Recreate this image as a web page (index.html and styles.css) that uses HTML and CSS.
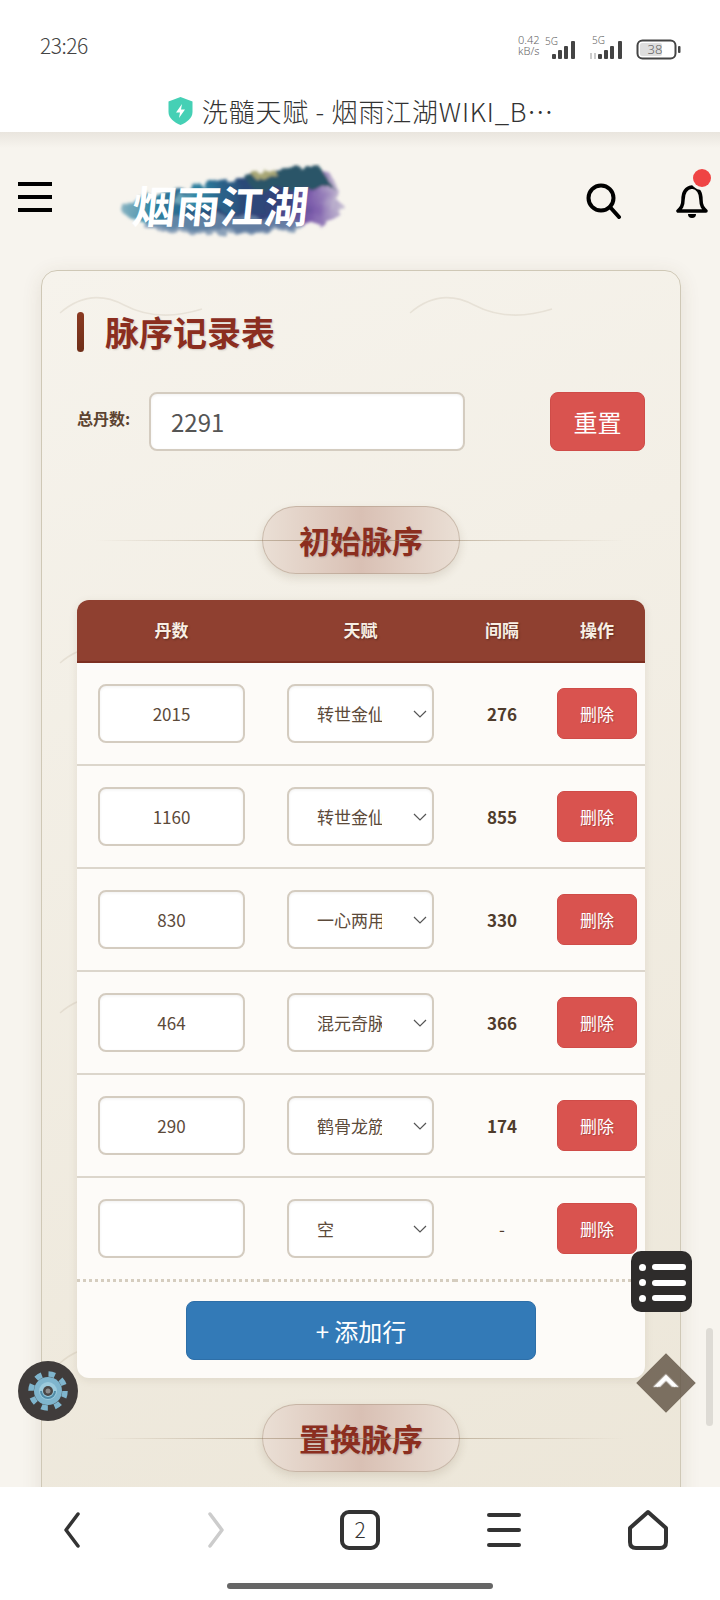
FILE: index.html
```html
<!DOCTYPE html>
<html lang="zh">
<head>
<meta charset="utf-8">
<title>洗髓天赋 - 烟雨江湖WIKI</title>
<link rel="stylesheet" href="styles.css">
</head>
<body>
<div class="app">
  <div class="status-bar">
    <span class="clock">23:26</span>
    <svg class="status-icons" width="164" height="30" viewBox="0 0 164 30">
      <g class="st-thin">
        <text x="0" y="11" font-size="11">0.42</text>
        <text x="0" y="22" font-size="11">kB/s</text>
        <text x="27" y="12" font-size="10">5G</text>
        <text x="74" y="11" font-size="10">5G</text>
      </g>
      <g fill="#444">
        <rect x="34" y="21" width="4" height="5" rx="1"/>
        <rect x="40" y="17" width="4" height="9" rx="1"/>
        <rect x="46" y="13" width="4" height="13" rx="1"/>
        <rect x="53" y="8" width="4" height="18" rx="1"/>
        <rect x="80" y="21" width="4" height="5" rx="1"/>
        <rect x="86" y="17" width="4" height="9" rx="1"/>
        <rect x="92" y="13" width="4" height="13" rx="1"/>
        <rect x="100" y="8" width="4" height="18" rx="1"/>
      </g>
      <path d="M73 20v6M77 20v6" stroke="#bbb" stroke-width="1.5"/>
      <rect x="119.500" y="7.500" width="38" height="18" rx="5" fill="none" stroke="#444" stroke-width="2"/>
      <rect x="122" y="10" width="22" height="13" rx="2" fill="#dedede"/>
      <rect x="160" y="13" width="2.500" height="7" rx="1" fill="#444"/>
      <text x="137" y="21" font-size="13" text-anchor="middle" class="st-thin">38</text>
    </svg>
  </div>

  <div class="title-bar">
    <svg class="shield" width="25" height="28" viewBox="0 0 25 28">
      <path d="M12.500 0 L24.500 4.500 V15 C24.500 21 19 25.500 12.500 28 C6 25.500 0.500 21 0.500 15 V4.500 Z" fill="#45d0b5"/>
      <path d="M14 7 L8 15.500 H12 L11 21 L17 12.500 H13 Z" fill="#fff"/>
    </svg>
    <span class="page-title">洗髓天赋 - 烟雨江湖WIKI_B…</span>
  </div>

  <main class="viewport">
    <header class="site-header">
      <div class="burger"><i></i><i></i><i></i></div>
      <svg class="logo" width="240" height="76" viewBox="0 0 240 76">
        <defs>
          <linearGradient id="ink" x1="0" x2="1" y1="0" y2="0">
            <stop offset="0" stop-color="#8fb6c4"/>
            <stop offset="0.14" stop-color="#2d85a3"/>
            <stop offset="0.42" stop-color="#2b4a78"/>
            <stop offset="0.68" stop-color="#34407a"/>
            <stop offset="0.84" stop-color="#7c5cab"/>
            <stop offset="1" stop-color="#c5bdd2"/>
          </linearGradient>
          <filter id="rough" x="-15%" y="-30%" width="130%" height="160%">
            <feTurbulence type="fractalNoise" baseFrequency="0.07" numOctaves="3" seed="4"/>
            <feDisplacementMap in="SourceGraphic" scale="13"/>
            <feGaussianBlur stdDeviation="1.800"/>
          </filter>
        </defs>
        <g filter="url(#rough)">
          <ellipse cx="120" cy="46" rx="112" ry="22" fill="url(#ink)"/>
          <path d="M60 40 Q90 16 130 16 L215 8 Q232 30 222 48 L120 50 Z" fill="url(#ink)"/>
          <path d="M130 12 L205 2 L222 26 L140 26 Z" fill="#2a5568"/>
          <ellipse cx="110" cy="62" rx="80" ry="9" fill="#6f8cab" opacity=".8"/>
          <path d="M138 10 L160 6 L165 13 L142 15 Z" fill="#a7a676"/>
        </g>
        <text class="logo-text" x="24" y="60" transform="skewX(-6)" textLength="176">烟雨江湖</text>
      </svg>
      <div class="header-tools">
        <svg width="36" height="36" viewBox="0 0 36 36" fill="none" stroke="#000" stroke-width="4" stroke-linecap="round">
          <circle cx="15" cy="15" r="12.500"/>
          <path d="M24 24 L33 34"/>
        </svg>
        <div class="bell-wrap">
          <svg width="32" height="36" viewBox="0 0 32 36" fill="none" stroke="#000" stroke-width="3.500" stroke-linejoin="round">
            <path d="M16 4 C9 5 7 11 7 17 C7 23 5 25 2 28 H30 C27 25 25 23 25 17 C25 11 23 5 16 4 Z"/>
            <path d="M12 31 a4 4 0 0 0 8 0 Z" fill="#000" stroke="none"/>
          </svg>
          <span class="bell-dot"></span>
        </div>
      </div>
    </header>

    <section class="card">
      <h1 class="card-title">脉序记录表</h1>
      <div class="form-row">
        <label class="form-label">总丹数:</label>
        <input class="total-input" type="text" value="2291">
        <button class="btn-reset">重置</button>
      </div>

      <h2 class="section-pill"><span>初始脉序</span></h2>

      <div class="table-box">
        <table class="record-table">
          <colgroup><col class="c1"><col class="c2"><col class="c3"><col class="c4"></colgroup>
          <thead><tr><th>丹数</th><th>天赋</th><th>间隔</th><th>操作</th></tr></thead>
          <tbody>
            <tr>
              <td><input class="cell-input" type="text" value="2015"></td>
              <td><div class="select-wrap"><select class="cell-select"><option>转世金仙</option></select><svg class="chev" width="14" height="8" viewBox="0 0 14 8"><path d="M1 1 L7 7 L13 1"/></svg></div></td>
              <td class="gap">276</td>
              <td><button class="btn-del">删除</button></td>
            </tr>
            <tr>
              <td><input class="cell-input" type="text" value="1160"></td>
              <td><div class="select-wrap"><select class="cell-select"><option>转世金仙</option></select><svg class="chev" width="14" height="8" viewBox="0 0 14 8"><path d="M1 1 L7 7 L13 1"/></svg></div></td>
              <td class="gap">855</td>
              <td><button class="btn-del">删除</button></td>
            </tr>
            <tr>
              <td><input class="cell-input" type="text" value="830"></td>
              <td><div class="select-wrap"><select class="cell-select"><option>一心两用</option></select><svg class="chev" width="14" height="8" viewBox="0 0 14 8"><path d="M1 1 L7 7 L13 1"/></svg></div></td>
              <td class="gap">330</td>
              <td><button class="btn-del">删除</button></td>
            </tr>
            <tr>
              <td><input class="cell-input" type="text" value="464"></td>
              <td><div class="select-wrap"><select class="cell-select"><option>混元奇脉</option></select><svg class="chev" width="14" height="8" viewBox="0 0 14 8"><path d="M1 1 L7 7 L13 1"/></svg></div></td>
              <td class="gap">366</td>
              <td><button class="btn-del">删除</button></td>
            </tr>
            <tr>
              <td><input class="cell-input" type="text" value="290"></td>
              <td><div class="select-wrap"><select class="cell-select"><option>鹤骨龙筋</option></select><svg class="chev" width="14" height="8" viewBox="0 0 14 8"><path d="M1 1 L7 7 L13 1"/></svg></div></td>
              <td class="gap">174</td>
              <td><button class="btn-del">删除</button></td>
            </tr>
            <tr class="last-row">
              <td><input class="cell-input" type="text" value=""></td>
              <td><div class="select-wrap"><select class="cell-select"><option>空</option></select><svg class="chev" width="14" height="8" viewBox="0 0 14 8"><path d="M1 1 L7 7 L13 1"/></svg></div></td>
              <td class="gap gap-empty">-</td>
              <td><button class="btn-del">删除</button></td>
            </tr>
          </tbody>
        </table>
        <div class="table-foot"><button class="btn-add">+ 添加行</button></div>
      </div>

      <h2 class="section-pill"><span>置换脉序</span></h2>
    </section>
  </main>

  <nav class="bottom-nav">
    <div class="nav-icons">
      <svg width="18" height="36" viewBox="0 0 18 36" fill="none" stroke="#333" stroke-width="3.500" stroke-linecap="round" stroke-linejoin="round"><path d="M15 2 L3 18 L15 34"/></svg>
      <svg width="18" height="36" viewBox="0 0 18 36" fill="none" stroke="#ccc" stroke-width="3.500" stroke-linecap="round" stroke-linejoin="round"><path d="M3 2 L15 18 L3 34"/></svg>
      <div class="tabs-count">2</div>
      <div class="nav-burger"><i></i><i></i><i></i></div>
      <svg width="42" height="42" viewBox="0 0 42 42" fill="none" stroke="#333" stroke-width="4" stroke-linejoin="round"><path d="M21 3 L39 19 V33 Q39 39 33 39 H9 Q3 39 3 33 V19 Z"/></svg>
    </div>
    <div class="home-bar"></div>
  </nav>

  <div class="float-list">
    <div><b></b><i></i></div>
    <div><b></b><i></i></div>
    <div><b></b><i></i></div>
  </div>
  <div class="float-gear">
    <svg width="40" height="40" viewBox="0 0 40 40">
      <circle cx="20" cy="20" r="14" fill="#7fb5cd"/>
      <circle cx="20" cy="20" r="17" fill="none" stroke="#7fb5cd" stroke-width="5.500" stroke-dasharray="6.500 6.850"/>
      <circle cx="20" cy="20" r="9" fill="#9ccbdd"/>
      <path d="M13 20 a7 7 0 0 0 14 0" fill="none" stroke="#4f8aa6" stroke-width="2"/>
      <circle cx="20" cy="20" r="5" fill="#4a4645"/>
      <circle cx="20" cy="20" r="2.500" fill="#8c8c8c"/>
    </svg>
  </div>
  <div class="float-top">
    <svg width="30" height="20" viewBox="0 0 30 20"><path d="M15 2 L28 15 H21 L15 9 L9 15 H2 Z" fill="#fff"/></svg>
  </div>
  <div class="scroll-thumb"></div>
</div>
</body>
</html>
```

FILE: styles.css
```css
* { box-sizing: border-box; }
html, body { margin: 0; padding: 0; }
body { font-family: "Noto Sans CJK SC", "Noto Sans", sans-serif; background: #fff; }
button, input, select { font-family: inherit; margin: 0; }

.app { position: relative; width: 720px; height: 1600px; overflow: hidden; display: flex; flex-direction: column; background: #fff; }

/* system bars */
.status-bar { height: 90px; flex: none; display: flex; justify-content: space-between; align-items: flex-start; padding: 30px 38px 0 40px; background: #fff; }
.clock { font-size: 21px; line-height: 30px; font-weight: 300; color: #444; letter-spacing: -0.5px; }
.status-icons { display: block; margin-top: 3px; }
.status-icons text { font-family: "Noto Sans", sans-serif; }
.st-thin { fill: #666; font-weight: 300; }

.title-bar { height: 42px; flex: none; display: flex; justify-content: center; align-items: flex-start; gap: 9px; padding-top: 6px; padding-left: 2px; background: #fff; }
.shield { display: block; margin-top: 1px; }
.page-title { font-size: 26px; line-height: 30px; font-weight: 300; color: #333; letter-spacing: 0.8px; white-space: nowrap; }

/* page */
.viewport { flex: 1; min-height: 0; overflow: hidden; background: #f7f4ee; }
.site-header { height: 138px; display: flex; align-items: center; padding: 0 12px 0 18px; background: linear-gradient(#e9e5de, #f7f4ee 16px); }
.burger { width: 34px; display: flex; flex-direction: column; gap: 9px; margin-top: -8px; }
.burger i { display: block; height: 4px; background: #000; }
.logo { display: block; margin-left: 61px; }
.logo-text { font-size: 44px; font-weight: 700; fill: #fff; font-family: "Noto Sans CJK SC", sans-serif; }
.header-tools { margin-left: auto; display: flex; align-items: center; gap: 54px; }
.bell-wrap { position: relative; width: 32px; height: 36px; }
.bell-wrap svg { display: block; }
.bell-dot { position: absolute; right: -3px; top: -14px; width: 18px; height: 18px; border-radius: 50%; background: #ef4444; box-shadow: 0 0 0 3px #f7f4ee; }

.card {
  width: 640px; margin-left: 41px; padding: 41px 35px 40px;
  border: 1px solid #cfc8b6; border-radius: 16px;
  background:
    url("data:image/svg+xml,%3Csvg xmlns='http://www.w3.org/2000/svg' width='350' height='350'%3E%3Cpath d='M18 42 Q48 16 82 34 T160 38' fill='none' stroke='%238b7355' stroke-opacity='.13' stroke-width='1.5'/%3E%3C/svg%3E") 0 0 repeat,
    linear-gradient(160deg, #f6f3ec, #ece6d8);
  box-shadow: 0 4px 20px rgba(90, 70, 40, .12);
}
.card-title { position: relative; margin: 0 0 40px; height: 40px; padding-left: 28px; font-size: 34px; line-height: 40px; font-weight: 700; color: #8b2e1f; text-shadow: 1px 1px 2px rgba(0, 0, 0, .15); }
.card-title::before { content: ""; position: absolute; left: 0; top: 0; width: 7px; height: 40px; border-radius: 4px; background: linear-gradient(#8b3a22, #6e2e18); }

.form-row { display: flex; align-items: flex-start; height: 59px; margin-bottom: 55px; }
.form-label { width: 72px; flex: none; padding-top: 12px; font-size: 16px; line-height: 28px; font-weight: 700; color: #5c4330; white-space: nowrap; }
.total-input { width: 316px; height: 59px; padding: 0 20px; border: 2px solid #d4ccc0; border-radius: 8px; background: #fff; font-size: 24px; color: #555; box-shadow: inset 0 1px 3px rgba(0, 0, 0, .06); outline: none; }
.btn-reset { margin-left: auto; width: 95px; height: 59px; border: 1px solid #cf4c48; border-radius: 8px; background: #d9534f; color: #fff; font-size: 24px; padding: 0; }

.section-pill { position: relative; margin: 0 0 26px; height: 68px; display: flex; justify-content: center; }
.section-pill::after { content: ""; position: absolute; left: 18px; right: 20px; top: 34px; height: 1px; background: linear-gradient(90deg, rgba(139, 115, 85, 0), rgba(139, 115, 85, .4) 30%, rgba(139, 115, 85, .6) 50%, rgba(139, 115, 85, .4) 70%, rgba(139, 115, 85, 0)); }
.section-pill span { width: 198px; height: 68px; border-radius: 34px; border: 1.500px solid rgba(170, 150, 130, .5); background: linear-gradient(90deg, #eadfd5, #d9c0b4 50%, #eadfd5); box-shadow: 0 4px 10px rgba(90, 70, 40, .14); font-size: 31px; line-height: 66px; font-weight: 700; text-align: center; color: #8b2e1f; text-shadow: 1px 1px 2px rgba(0, 0, 0, .15); }

.table-box { margin-bottom: 26px; border-radius: 12px; overflow: hidden; background: #fdfbf8; box-shadow: 0 2px 8px rgba(90, 70, 40, .1); }
.record-table { width: 100%; table-layout: fixed; border-collapse: collapse; }
.c1, .c2 { width: 189px; }
.c3 { width: 94px; }
.record-table th { height: 62px; padding: 0 0 2px; background: #8f4030; border-bottom: 2px solid #7d3021; color: #f8efe4; font-size: 17px; font-weight: 700; text-shadow: 1px 1px 2px rgba(0, 0, 0, .35); }
.record-table td { height: 103px; padding: 0; text-align: center; vertical-align: middle; border-bottom: 2px solid #dcd6cc; }
.record-table .last-row td { border-bottom: 3px dotted #d5cdbf; }
.cell-input { display: block; width: 147px; height: 59px; margin: 0 auto; border: 2px solid #d4ccc0; border-radius: 8px; background: #fff; font-size: 17px; color: #5c4a3a; text-align: center; box-shadow: inset 0 1px 3px rgba(0, 0, 0, .06); outline: none; }
.select-wrap { position: relative; width: 147px; height: 59px; margin: 0 auto; }
.cell-select { display: block; width: 100%; height: 100%; padding: 0 50px 0 28px; border: 2px solid #d4ccc0; border-radius: 8px; background: #fff; font-size: 17px; color: #5c4a3a; appearance: none; -webkit-appearance: none; box-shadow: inset 0 1px 3px rgba(0, 0, 0, .06); outline: none; }
.chev { position: absolute; right: 7px; top: 26px; fill: none; stroke: #555; stroke-width: 1.200; }
.gap { font-size: 17px; font-weight: 700; color: #4f3c2c; }
.gap-empty { font-weight: 400; }
.btn-del { display: block; width: 80px; height: 51px; margin: 0 8px 0 auto; padding: 0; border: 1px solid #cf4c48; border-radius: 7px; background: #d9534f; color: #fff; font-size: 17px; text-shadow: 1px 1px 1px rgba(0, 0, 0, .2); }
.table-foot { display: flex; justify-content: center; padding: 19px 0 18px; }
.btn-add { width: 350px; height: 59px; padding: 0; border: 1px solid #2e6fa8; border-radius: 8px; background: #337ab7; color: #fff; font-size: 24px; }

/* bottom nav */
.bottom-nav { height: 113px; flex: none; background: #fff; position: relative; z-index: 1; padding-top: 22px; }
.nav-icons { display: grid; grid-template-columns: repeat(5, 144px); justify-items: center; align-items: center; height: 42px; }
.tabs-count { width: 40px; height: 40px; border: 4px solid #333; border-radius: 9px; font-size: 21px; line-height: 30px; text-align: center; color: #333; font-weight: 300; }
.nav-burger { width: 34px; display: flex; flex-direction: column; gap: 11px; }
.nav-burger i { display: block; height: 4px; border-radius: 2px; background: #333; }
.home-bar { width: 266px; height: 6px; margin: 32px auto 0 227px; border-radius: 3px; background: #666; }

/* floating */
.float-list { position: absolute; left: 631px; top: 1251px; width: 61px; height: 61px; padding: 13px 6px 0 8px; border-radius: 10px; background: #2e2c2b; display: flex; flex-direction: column; gap: 9.500px; z-index: 2; }
.float-list div { display: flex; align-items: center; gap: 6px; height: 6px; }
.float-list b { width: 7px; height: 7px; border-radius: 50%; background: #fff; }
.float-list i { flex: 1; height: 6px; border-radius: 3px; background: #fff; }
.float-gear { position: absolute; left: 18px; top: 1361px; width: 60px; height: 60px; border-radius: 50%; background: #403c3b; display: flex; align-items: center; justify-content: center; z-index: 2; }
.float-gear svg { display: block; }
.float-top { position: absolute; left: 645px; top: 1362px; width: 42px; height: 42px; transform: rotate(45deg); background: rgba(98, 84, 70, .82); filter: blur(.6px); z-index: 2; display: flex; align-items: center; justify-content: center; }
.float-top svg { display: block; transform: rotate(-45deg) translateY(-1px); }
.scroll-thumb { position: absolute; left: 706px; top: 1328px; width: 7px; height: 98px; border-radius: 4px; background: #dedbd5; z-index: 2; }
```
